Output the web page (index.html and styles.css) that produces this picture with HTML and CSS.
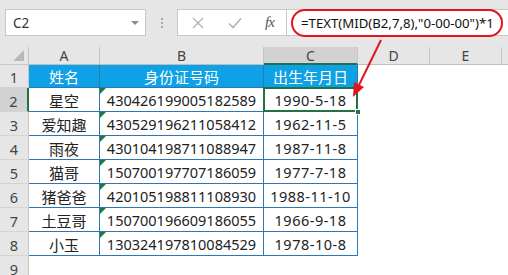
FILE: index.html
```html
<!DOCTYPE html>
<html lang="zh-CN">
<head>
<meta charset="utf-8">
<title>Sheet</title>
<link rel="stylesheet" href="styles.css">
</head>
<body>
<div class="toolbar">
  <div class="namebox"><span class="namebox-text">C2</span><span class="caret"></span></div>
  <div class="grip"><i></i><i></i><i></i></div>
  <div class="fbar">
    <div class="fbtns">
      <svg class="icon" width="12" height="12" viewBox="0 0 12 12"><path d="M1 1 L11 11 M11 1 L1 11" stroke="#b4b4b4" stroke-width="1.4" fill="none"/></svg>
      <svg class="icon" width="14" height="12" viewBox="0 0 14 12"><path d="M1 6.5 L5 10.5 L13 1.5" stroke="#b4b4b4" stroke-width="1.6" fill="none"/></svg>
      <span class="fx">fx</span>
    </div>
    <div class="finput"><span class="formula">=TEXT(MID(B2,7,8),"0-00-00")*1</span></div>
  </div>
</div>

<div class="sheet">
  <div class="corner"><span class="corner-tri"></span></div>
  <div class="colhead">A</div>
  <div class="colhead">B</div>
  <div class="colhead sel">C</div>
  <div class="colhead">D</div>
  <div class="colhead">E</div>
  <div class="colhead last"></div>

  <div class="rowhead">1</div>
  <div class="cell hd ca">姓名</div>
  <div class="cell hd cb">身份证号码</div>
  <div class="cell hd cc">出生年月日</div>
  <div class="empty"></div><div class="empty"></div><div class="empty"></div>

  <div class="rowhead sel">2</div>
  <div class="cell ca">星空</div>
  <div class="cell cb num">430426199005182589</div>
  <div class="cell cc num active">1990-5-18<span class="handle"></span></div>
  <div class="empty"></div><div class="empty"></div><div class="empty"></div>

  <div class="rowhead">3</div>
  <div class="cell ca">爱知趣</div>
  <div class="cell cb num">430529196211058412</div>
  <div class="cell cc num">1962-11-5</div>
  <div class="empty"></div><div class="empty"></div><div class="empty"></div>

  <div class="rowhead">4</div>
  <div class="cell ca">雨夜</div>
  <div class="cell cb num">430104198711088947</div>
  <div class="cell cc num">1987-11-8</div>
  <div class="empty"></div><div class="empty"></div><div class="empty"></div>

  <div class="rowhead">5</div>
  <div class="cell ca">猫哥</div>
  <div class="cell cb num">150700197707186059</div>
  <div class="cell cc num">1977-7-18</div>
  <div class="empty"></div><div class="empty"></div><div class="empty"></div>

  <div class="rowhead">6</div>
  <div class="cell ca">猪爸爸</div>
  <div class="cell cb num">420105198811108930</div>
  <div class="cell cc num">1988-11-10</div>
  <div class="empty"></div><div class="empty"></div><div class="empty"></div>

  <div class="rowhead">7</div>
  <div class="cell ca">土豆哥</div>
  <div class="cell cb num">150700196609186055</div>
  <div class="cell cc num">1966-9-18</div>
  <div class="empty"></div><div class="empty"></div><div class="empty"></div>

  <div class="rowhead">8</div>
  <div class="cell ca">小玉</div>
  <div class="cell cb num">130324197810084529</div>
  <div class="cell cc num">1978-10-8</div>
  <div class="empty"></div><div class="empty"></div><div class="empty"></div>

  <div class="rowhead">9</div>
  <div class="empty"></div><div class="empty"></div><div class="empty"></div>
  <div class="empty"></div><div class="empty"></div><div class="empty"></div>
</div>

<svg class="arrow" width="508" height="275" viewBox="0 0 508 275">
  <line x1="381" y1="40" x2="359" y2="85" stroke="#e3151c" stroke-width="2"/>
  <polygon points="353,97 354,82 364,87" fill="#e3151c"/>
</svg>
</body>
</html>
```

FILE: styles.css
```css
* { box-sizing: border-box; }
html, body { margin: 0; padding: 0; }
body {
  width: 508px;
  height: 275px;
  overflow: hidden;
  background: #ffffff;
  font-family: "Noto Sans", "Noto Sans CJK SC", sans-serif;
  color: #222;
  position: relative;
}

/* ---------- toolbar ---------- */
.toolbar {
  height: 47px;
  background: #e6e6e6;
  display: flex;
  align-items: flex-start;
  padding-top: 9px;
  padding-left: 5px;
}
.namebox {
  width: 141px;
  height: 27px;
  background: #fff;
  border: 1px solid #c8c8c8;
  display: flex;
  align-items: center;
  justify-content: space-between;
  padding: 0 6px 0 7px;
}
.namebox-text {
  font-family: "Noto Sans", sans-serif;
  font-size: 13.5px;
  color: #333;
}
.caret {
  width: 0; height: 0;
  border-left: 4px solid transparent;
  border-right: 4px solid transparent;
  border-top: 4px solid #8a8a8a;
}
.grip {
  width: 31px;
  height: 27px;
  display: flex;
  flex-direction: column;
  align-items: center;
  justify-content: center;
  gap: 2px;
}
.grip i {
  display: block;
  width: 2px; height: 2px;
  background: #a8a8a8;
}
.fbar {
  display: flex;
  height: 27px;
  flex: 1;
}
.fbtns {
  width: 110px;
  background: #fff;
  border: 1px solid #c8c8c8;
  display: flex;
  align-items: center;
  padding-left: 14px;
  gap: 0;
}
.fbtns .icon:first-child { margin-right: 24px; }
.fbtns .icon:nth-child(2) { margin-right: 23px; }
.fx {
  font-family: "Liberation Serif", serif;
  font-style: italic;
  font-size: 15px;
  color: #555;
  letter-spacing: -1px;
}
.finput {
  flex: 1;
  background: #fff;
  border: 1px solid #c8c8c8;
  border-left: none;
  display: flex;
  align-items: center;
  padding-left: 4px;
  margin-right: -6px;
}
.formula {
  display: inline-flex;
  align-items: center;
  height: 28px;
  width: 212px;
  border: 2px solid #e0141b;
  border-radius: 14px;
  padding-left: 8px;
  font-family: "Noto Sans", sans-serif;
  font-size: 13.2px;
  color: #111;
  white-space: nowrap;
}

/* ---------- sheet ---------- */
.sheet {
  display: grid;
  grid-template-columns: 29px 71px 164px 94px 72px 72px 6px;
  grid-template-rows: 18px 23px repeat(7, 24px) 24px;
}
.corner {
  background: #e6e6e6;
  border-right: 1px solid #c6c6c6;
  border-bottom: 1px solid #c6c6c6;
  position: relative;
}
.corner-tri {
  position: absolute;
  right: 4px;
  bottom: 3px;
  width: 0; height: 0;
  border-left: 11px solid transparent;
  border-bottom: 11px solid #b9b9b9;
}
.colhead {
  background: #e6e6e6;
  border-right: 1px solid #c6c6c6;
  border-bottom: 1px solid #bdbdbd;
  display: flex;
  align-items: center;
  justify-content: center;
  font-family: "Noto Sans", sans-serif;
  font-size: 14px;
  color: #444;
}
.colhead.sel {
  background: #d2d2d2;
  border-bottom: 2px solid #217346;
}
.colhead.last { border-right: none; }
.rowhead {
  background: #e6e6e6;
  border-right: 1px solid #c6c6c6;
  border-bottom: 1px solid #d4d4d4;
  display: flex;
  align-items: center;
  justify-content: center;
  padding-top: 2px;
  font-family: "Noto Sans", sans-serif;
  font-size: 14.5px;
  color: #444;
}
.rowhead.sel {
  background: #d2d2d2;
  border-right: 2px solid #217346;
}
.empty { background: #fff; }

.cell {
  display: flex;
  align-items: center;
  justify-content: center;
  border-right: 1px solid #2b78b8;
  border-bottom: 1px solid #2b78b8;
  font-size: 15px;
  color: #222;
  white-space: nowrap;
  position: relative;
  padding-top: 1px;
}
.cell.hd {
  background: #0ea1e6;
  color: #fff;
}
.cell.num { font-size: 14.5px; }
.cell.cc.num { letter-spacing: 0.5px; }
.cell.cb.num::before {
  content: "";
  position: absolute;
  left: 0;
  top: 0;
  width: 0; height: 0;
  border-top: 6px solid #1e7a45;
  border-right: 6px solid transparent;
}
.cell.active::after {
  content: "";
  position: absolute;
  top: -1px; left: -1px; right: -1px; bottom: -1px;
  border: 2px solid #217346;
}
.handle {
  position: absolute;
  right: -4px;
  bottom: -4px;
  width: 6px; height: 6px;
  background: #217346;
  border: 1px solid #fff;
  z-index: 2;
}

.arrow {
  position: absolute;
  left: 0; top: 0;
  pointer-events: none;
}
```
